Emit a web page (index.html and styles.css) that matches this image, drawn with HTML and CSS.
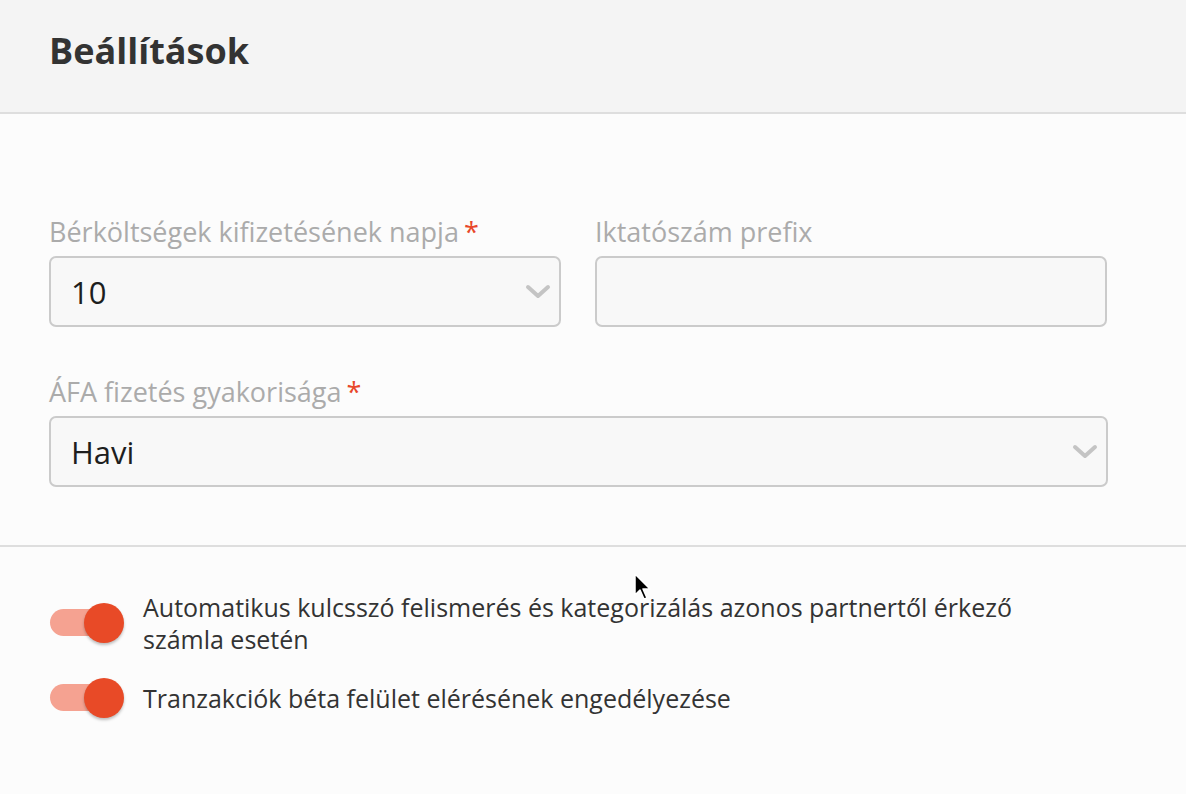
FILE: index.html
```html
<!DOCTYPE html>
<html lang="hu">
<head>
<meta charset="utf-8">
<link rel="stylesheet" href="styles.css">
</head>
<body>
<div class="page">
  <header class="header">
    <h1 class="title">Beállítások</h1>
  </header>
  <section class="form">
    <div class="row">
      <div class="field half">
        <label class="label">Bérköltségek kifizetésének napja<span class="req">*</span></label>
        <div class="input select">
          <span class="value">10</span>
          <svg class="chev" viewBox="0 0 26 16" width="26" height="16"><path d="M3 3 L13 12 L23 3" fill="none" stroke="#c4c4c4" stroke-width="4" stroke-linecap="round" stroke-linejoin="round"/></svg>
        </div>
      </div>
      <div class="field half">
        <label class="label">Iktatószám prefix</label>
        <div class="input"></div>
      </div>
    </div>
    <div class="row">
      <div class="field full">
        <label class="label">ÁFA fizetés gyakorisága<span class="req">*</span></label>
        <div class="input select">
          <span class="value">Havi</span>
          <svg class="chev" viewBox="0 0 26 16" width="26" height="16"><path d="M3 3 L13 12 L23 3" fill="none" stroke="#c4c4c4" stroke-width="4" stroke-linecap="round" stroke-linejoin="round"/></svg>
        </div>
      </div>
    </div>
  </section>
  <section class="toggles">
    <div class="toggle-row">
      <span class="switch"><span class="track"></span><span class="knob"></span></span>
      <span class="toggle-text">Automatikus kulcsszó felismerés és kategorizálás azonos partnertől érkező számla esetén</span>
    </div>
    <div class="toggle-row">
      <span class="switch"><span class="track"></span><span class="knob"></span></span>
      <span class="toggle-text">Tranzakciók béta felület elérésének engedélyezése</span>
    </div>
    <svg class="cursor" viewBox="0 0 20 30" width="20" height="30"><path d="M1 1 L1 22 L6 17 L10 26 L13 25 L9 16 L16 16 Z" fill="#000" stroke="#fff" stroke-width="1.5" stroke-linejoin="round"/></svg>
  </section>
</div>
</body>
</html>
```
FILE: styles.css
```css
* { box-sizing: border-box; }
html, body { margin: 0; padding: 0; }
body {
  background: #fcfcfc;
  font-family: "Open Sans", "Noto Sans", sans-serif;
  width: 1186px;
  height: 794px;
  overflow: hidden;
}
.page { position: relative; }
.header {
  background: #f4f4f4;
  height: 114px;
  border-bottom: 2px solid #dedede;
  padding: 29px 49px 0;
}
.title {
  margin: 0;
  font-size: 36px;
  font-weight: 700;
  color: #333;
  line-height: 44px;
}
.form {
  padding: 100px 78px 58px 49px;
  border-bottom: 2px solid #dedede;
  display: flex;
  flex-direction: column;
  gap: 47px;
}
.row { display: flex; gap: 34px; }
.field { display: flex; flex-direction: column; }
.half { width: 512px; }
.full { width: 1059px; }
.label {
  font-size: 27px;
  color: #ababab;
  line-height: 36px;
  margin-bottom: 6px;
}
.req { color: #e8472a; margin-left: 5px; }
.input {
  height: 71px;
  border: 2px solid #cbcbcb;
  border-radius: 7px;
  background: #f8f8f8;
  display: flex;
  align-items: center;
  justify-content: space-between;
  padding: 0 8px 0 20px;
}
.value { font-size: 31px; color: #1e1e1e; }
.chev { display: block; }
.toggles {
  position: relative;
  padding: 44px 49px 0 50px;
  display: flex;
  flex-direction: column;
  gap: 23px;
}
.toggle-row { display: flex; align-items: center; gap: 19px; }
.toggle-text {
  font-size: 25px;
  color: #333;
  line-height: 32px;
  max-width: 900px;
}
.switch {
  position: relative;
  width: 74px;
  height: 40px;
  flex: none;
}
.track {
  position: absolute;
  left: 0; top: 6px;
  width: 60px; height: 27px;
  border-radius: 14px;
  background: #f5a291;
}
.knob {
  position: absolute;
  left: 34px; top: 0;
  width: 40px; height: 40px;
  border-radius: 50%;
  background: #e84a27;
  box-shadow: 0 2px 3px rgba(0,0,0,0.25);
}
.cursor { position: absolute; left: 634px; top: 26px; }
```
